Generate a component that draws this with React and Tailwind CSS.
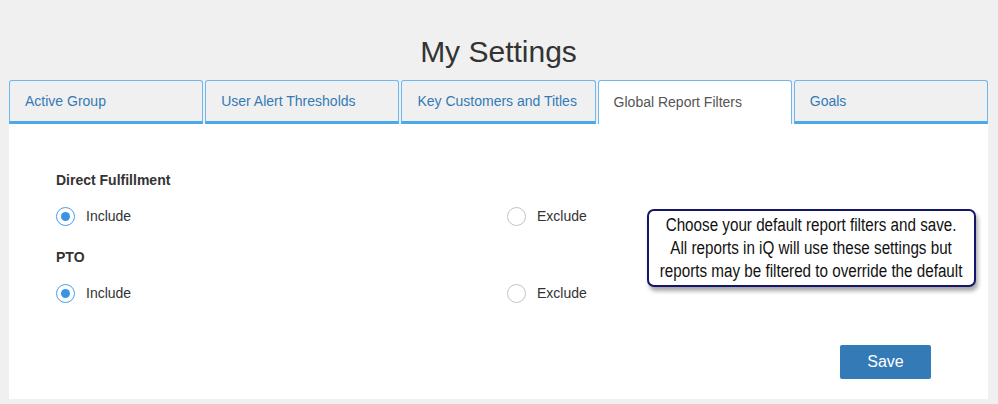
import React, { useState } from "react";

const tabs = [
  "Active Group",
  "User Alert Thresholds",
  "Key Customers and Titles",
  "Global Report Filters",
  "Goals",
];

const filters = [
  { key: "direct", label: "Direct Fulfillment" },
  { key: "pto", label: "PTO" },
];

const Radio = ({ checked, label, onClick }) => (
  <button
    type="button"
    onClick={onClick}
    className="flex items-center gap-[11px] text-left"
  >
    <span
      className={
        checked
          ? "flex h-[19px] w-[19px] items-center justify-center rounded-full border-[1.5px] border-[#4a9ded] bg-white"
          : "flex h-[19px] w-[19px] items-center justify-center rounded-full border border-[#c4c4c4] bg-white"
      }
    >
      {checked && <span className="h-[9px] w-[9px] rounded-full bg-[#3b93e6]" />}
    </span>
    <span className="text-[14px] text-[#333]">{label}</span>
  </button>
);

const App = () => {
  const [activeTab, setActiveTab] = useState("Global Report Filters");
  const [values, setValues] = useState({ direct: "include", pto: "include" });

  const setValue = (key, value) => {
    setValues((prev) => ({ ...prev, [key]: value }));
  };

  return (
    <div
      className="min-h-[404px] w-[998px] bg-[#f0f0f0] pl-[9px] pr-[10px]"
      style={{ fontFamily: '"Liberation Sans", Arial, sans-serif' }}
    >
      <h1 className="pt-[35px] pb-[11px] text-center text-[30px] leading-[34px] text-[#333]">
        My Settings
      </h1>

      <div className="grid grid-cols-5 gap-[2px]">
        {tabs.map((tab) => (
          <button
            key={tab}
            type="button"
            onClick={() => setActiveTab(tab)}
            className={
              tab === activeTab
                ? "h-[44px] rounded-t-[3px] border border-b-0 border-[#6db7ee] bg-white pl-[15px] text-left text-[14px] text-[#555]"
                : "h-[44px] rounded-t-[3px] border border-b-[3px] border-[#6db7ee] border-b-[#4aa9ea] bg-[#f0f0f0] pl-[15px] text-left text-[14px] text-[#337ab7]"
            }
          >
            {tab}
          </button>
        ))}
      </div>

      <div className="relative h-[275px] bg-white pl-[47px] pt-[48px]">
        {filters.map((filter) => (
          <div key={filter.key} className="mb-[22px]">
            <div className="text-[14px] font-bold leading-[16px] text-[#333]">
              {filter.label}
            </div>
            <div className="mt-[18px] flex">
              <div className="w-[451px]">
                <Radio
                  label="Include"
                  checked={values[filter.key] === "include"}
                  onClick={() => setValue(filter.key, "include")}
                />
              </div>
              <Radio
                label="Exclude"
                checked={values[filter.key] === "exclude"}
                onClick={() => setValue(filter.key, "exclude")}
              />
            </div>
          </div>
        ))}

        <div className="absolute left-[638px] top-[85px] flex h-[78px] w-[329px] flex-col items-center justify-center overflow-hidden rounded-[7px] border-2 border-[#15166b] bg-white pt-[1px] shadow-[2px_4px_4px_rgba(0,0,0,0.35)]">
          <p className="scale-x-[0.845] whitespace-nowrap text-center text-[18px] leading-[23px] text-[#111]">
            Choose your default report filters and save.
            <br />
            All reports in iQ will use these settings but
            <br />
            reports may be filtered to override the default
          </p>
        </div>

        <div className="absolute right-[57px] top-[221px]">
          <button
            type="button"
            className="h-[34px] w-[91px] rounded-[2px] bg-[#337ab7] text-[16px] text-white"
          >
            Save
          </button>
        </div>
      </div>
    </div>
  );
};

export default App;
